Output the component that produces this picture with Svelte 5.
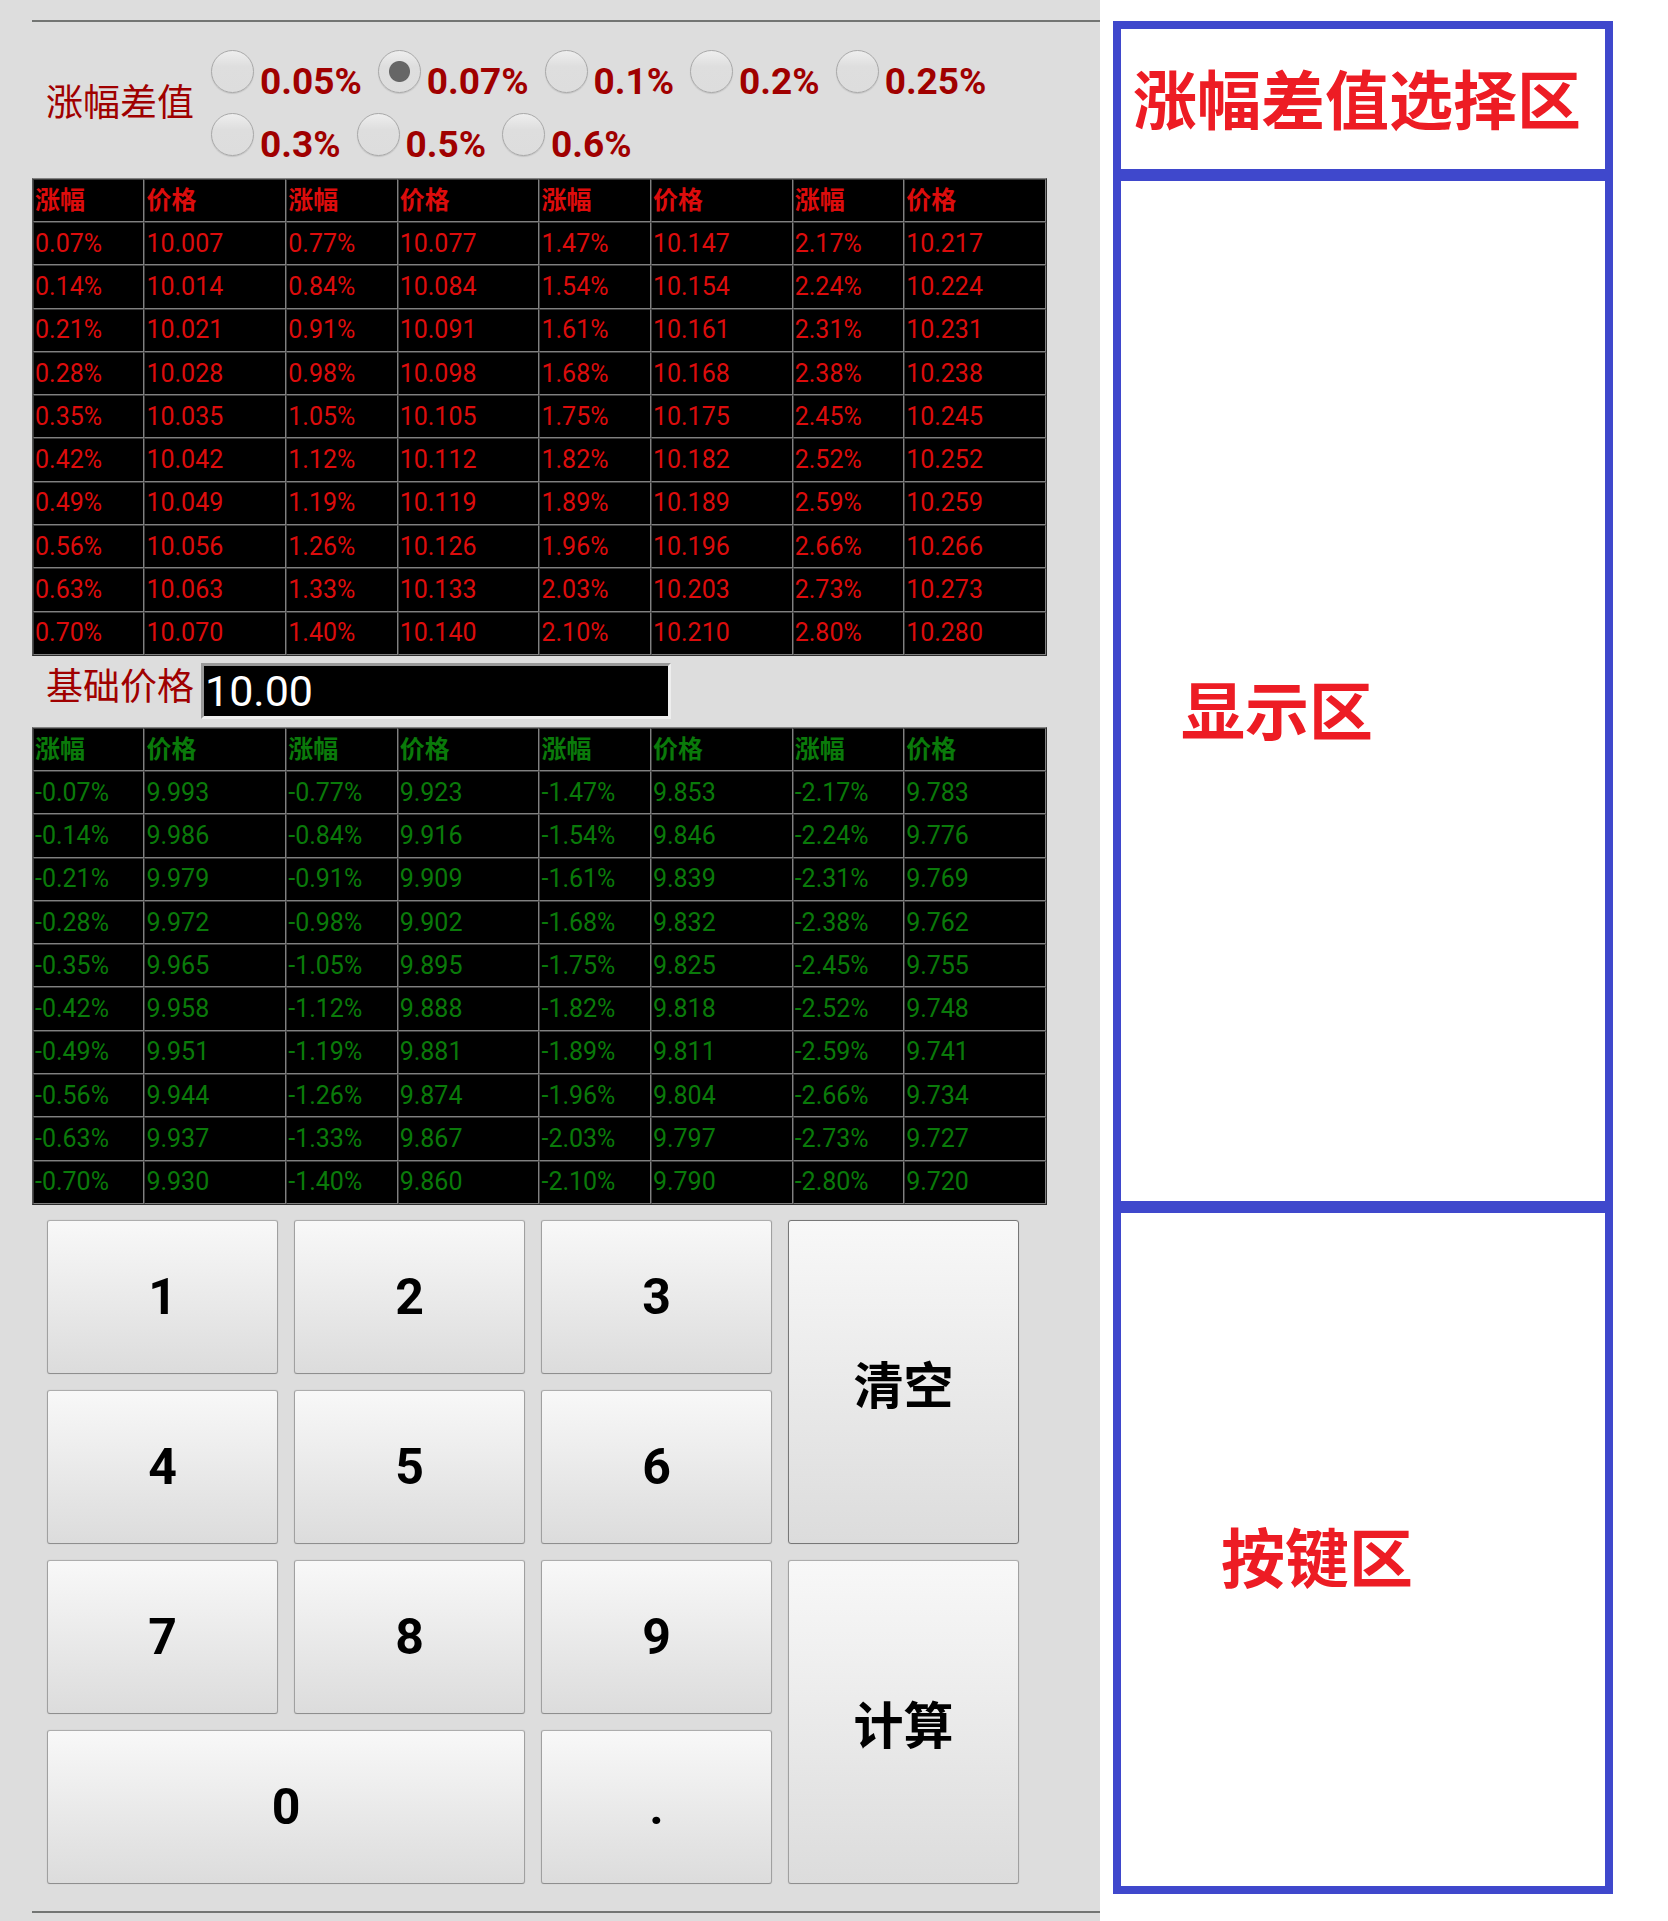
<script>
  const steps = ['0.05', '0.07', '0.1', '0.2', '0.25', '0.3', '0.5', '0.6'];
  const digits = ['1', '2', '3', '4', '5', '6', '7', '8', '9'];
  const rows = Array.from({ length: 10 }, (_, i) => i);
  const groups = [0, 1, 2, 3];

  let step = $state('0.07');
  let price = $state('10.00');
  let base = $state(10);

  // Every column pair holds ten consecutive multiples of the chosen step.
  function build(sign) {
    return rows.map((r) =>
      groups.map((g) => {
        const pct = sign * (g * 10 + r + 1) * Number(step);
        return { pct: pct.toFixed(2) + '%', value: (base * (1 + pct / 100)).toFixed(3) };
      })
    );
  }

  const tables = $derived({ up: build(1), down: build(-1) });

  function press(key) {
    price += key;
  }
  function clear() {
    price = '';
  }
  function calculate() {
    base = Number(price) || 0;
  }
</script>

{#snippet quotes(kind, label)}
  <table class={kind} aria-label={label}>
    <thead>
      <tr>
        {#each groups as g (g)}
          <th class="pct">涨幅</th>
          <th class="val">价格</th>
        {/each}
      </tr>
    </thead>
    <tbody>
      {#each tables[kind] as row, i (i)}
        <tr>
          {#each row as cell, j (j)}
            <td>{cell.pct}</td>
            <td>{cell.value}</td>
          {/each}
        </tr>
      {/each}
    </tbody>
  </table>
{/snippet}

<div class="page">
  <main class="app">
    <div class="frame">
      <div class="selector" role="radiogroup" aria-labelledby="step-label">
        <span class="caption" id="step-label">涨幅差值</span>
        <div class="options">
          {#each steps as s (s)}
            <label class="option">
              <input type="radio" name="step" value={s} bind:group={step} />
              <span>{s}%</span>
            </label>
          {/each}
        </div>
      </div>

      {@render quotes('up', '上涨价格')}

      <div class="base">
        <label class="caption" for="price">基础价格</label>
        <input id="price" type="text" bind:value={price} />
      </div>

      {@render quotes('down', '下跌价格')}

      <div class="keypad">
        {#each digits as d (d)}
          <button type="button" onclick={() => press(d)}>{d}</button>
        {/each}
        <button type="button" class="zero" onclick={() => press('0')}>0</button>
        <button type="button" onclick={() => press('.')}>.</button>
        <button type="button" class="clear" onclick={clear}>清空</button>
        <button type="button" class="calc" onclick={calculate}>计算</button>
      </div>
    </div>
  </main>

  <aside class="notes">
    <div class="zone select-zone">涨幅差值选择区</div>
    <div class="zone display-zone">显示区</div>
    <div class="zone keys-zone">按键区</div>
  </aside>
</div>

<style>
  :global(body) {
    background: #fff;
  }

  .page {
    display: grid;
    grid-template-columns: 1100fr 568fr;
    font-family: Roboto, 'Noto Sans CJK SC', sans-serif;
  }

  .app {
    background: #ddd;
    padding: 20px 0 8px 32px;
  }

  .frame {
    border-top: 2px solid #737573;
    border-bottom: 2px solid #737573;
    padding-bottom: 27px;
  }

  .selector {
    display: flex;
    align-items: center;
    padding: 8px 0 0 14px;
    gap: 17px;
  }

  .caption {
    flex: none;
    font-size: 37px;
    line-height: 50px;
    color: #a00000;
  }

  .options {
    display: flex;
    flex-wrap: wrap;
    column-gap: 16px;
    padding: 20px 0 2px;
  }

  .option {
    display: flex;
    gap: 6px;
    font-size: 37px;
    font-weight: 700;
    line-height: 63px;
    color: #a00000;
  }

  .option input {
    appearance: none;
    flex: none;
    width: 43px;
    height: 43px;
    margin: 0;
    border: 1px solid #a9a9a9;
    border-radius: 50%;
    background: linear-gradient(#eee, #dedede 38%, #ddd);
    box-shadow: 0 1px 1px #c4c4c4;
  }

  .option input:checked {
    background:
      radial-gradient(circle, #666 10px, transparent 11px),
      linear-gradient(#eee, #dedede 38%, #ddd);
  }

  table {
    width: calc(100% - 53px);
    height: 478px;
    table-layout: fixed;
    border-collapse: separate;
    border-spacing: 0;
    border: 1px solid;
    border-color: #808080 #2c2c2c #2c2c2c #555;
    background: #000;
    font-size: 25px;
    line-height: 28px;
  }

  th,
  td {
    box-sizing: border-box;
    height: 43px;
    padding: 0 1px;
    border: 1px solid;
    border-color: #3a3a3a #808080 #808080 #3a3a3a;
    text-align: left;
  }

  .pct {
    width: 11%;
  }

  .val {
    width: 14%;
  }

  .up {
    color: #dc0c0c;
  }

  .down {
    color: #0a7a0a;
  }

  .base {
    display: flex;
    align-items: flex-start;
    gap: 7px;
    padding: 7px 0 8px 14px;
  }

  .base input {
    width: 470px;
    height: 56px;
    min-width: 0;
    box-sizing: border-box;
    padding: 0 1px;
    border: 3px solid;
    border-color: #999 #eee #eee #999;
    background: #000;
    color: #fff;
    font: 43px Roboto, sans-serif;
  }

  .keypad {
    display: grid;
    grid-template-columns: repeat(4, 1fr);
    grid-auto-rows: 154px;
    gap: 16px;
    margin: 15px 81px 0 15px;
  }

  .keypad button {
    padding: 0;
    border: 1px solid;
    border-color: #adadad #a0a0a0 #8e8e8e;
    border-radius: 3px;
    background: linear-gradient(#f8f8f8, #dcdcdc);
    box-shadow: 0 0 1px #aaa;
    color: #000;
    font: 700 50px Roboto, 'Noto Sans CJK SC', sans-serif;
  }

  .keypad .zero {
    grid-column: span 2;
  }

  /* The two tall keys take the fourth column; the rest flow beside them. */
  .keypad .clear {
    grid-area: 1 / 4 / span 2;
    border-color: #777;
  }

  .keypad .calc {
    grid-area: 3 / 4 / span 2;
  }

  .notes {
    display: grid;
    grid-template-rows: 140fr 1032fr 685fr;
    margin: 21px 55px 27px 13px;
    border: 8px solid #3f48cc;
  }

  .zone {
    display: flex;
    align-items: center;
    box-sizing: border-box;
    color: #ed1c24;
    font-size: 64px;
    font-weight: 700;
    line-height: 72px;
    white-space: nowrap;
  }

  .zone + .zone {
    border-top: 12px solid #3f48cc;
  }

  .select-zone {
    padding: 8px 0 0 12px;
  }

  .display-zone {
    padding: 46px 0 0 60px;
  }

  .keys-zone {
    padding: 22px 0 0 100px;
  }
</style>
